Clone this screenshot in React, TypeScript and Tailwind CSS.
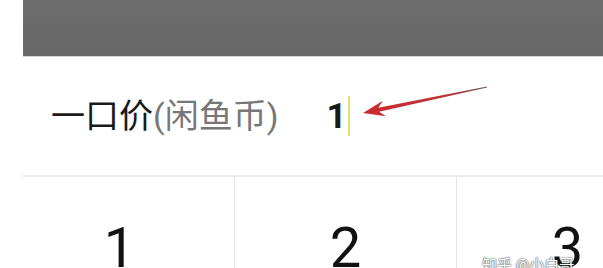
import React from 'react';

function Arrow() {
  return (
    <svg
      className="absolute left-[360px] top-[84px]"
      width="130"
      height="36"
      viewBox="0 0 130 36"
    >
      <defs>
        <linearGradient id="arrowFill" x1="0" y1="0" x2="1" y2="0">
          <stop offset="0" stopColor="#cc2a30" />
          <stop offset="0.7" stopColor="#b8363a" />
          <stop offset="1" stopColor="#6e5a5c" />
        </linearGradient>
      </defs>
      <polygon
        points="3,29 26.1,32.3 19.1,27.7 127.1,3.6 126.9,2.4 18.3,23.7 22.9,16.7"
        fill="url(#arrowFill)"
      />
    </svg>
  );
}

const keys = ['1', '2', '3'];

export default function App() {
  return (
    <div
      className="relative w-[603px] h-[268px] overflow-hidden bg-white pl-[23px]"
      style={{ fontFamily: "Roboto, 'Noto Sans CJK SC', sans-serif" }}
    >
      <div className="h-[57px] bg-gradient-to-b from-[#6d6d6d] to-[#686868] border-b border-[#d6d6d6]" />

      <div className="h-[120px] flex items-center pl-[28px] border-b-2 border-[#ececec]">
        <span className="text-[34px] leading-none text-[#1a1a1a]">一口价</span>
        <span className="text-[34px] leading-none text-[#777777]">(闲鱼币)</span>
        <span className="ml-[48px] text-[35px] leading-none font-bold text-[#1a1a1a]">1</span>
        <span className="ml-[1px] w-[2px] h-[40px] bg-[#e6df6e]" />
      </div>

      <div className="grid grid-cols-[211px_222px_222px] h-[92px]">
        {keys.map((k, i) => (
          <div
            key={k}
            className={
              i === 0
                ? 'flex justify-center pt-[43px] pr-[18px]'
                : 'flex justify-center pt-[43px] border-l border-[#e6e6e6]'
            }
          >
            <span className="text-[56px] leading-[56px] text-[#111111]">{k}</span>
          </div>
        ))}
      </div>

      <Arrow />

      <div
        className="absolute left-[482px] top-[258px] text-[15px] leading-none text-white"
        style={{ textShadow: '0 0 2px #555, 0 0 1px #333' }}
      >
        知乎 @小白哥
      </div>
    </div>
  );
}
